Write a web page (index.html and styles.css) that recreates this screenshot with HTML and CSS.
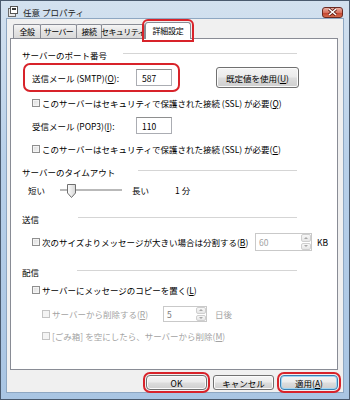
FILE: index.html
```html
<!DOCTYPE html>
<html lang="ja">
<head>
    <meta charset="UTF-8">
    <title>任意 プロパティ</title>
    <link rel="stylesheet" href="styles.css">
</head>
<body>
<div class="window">
    <div class="titlebar">
        <svg class="app-icon" width="10" height="11" viewBox="0 0 10 11">
            <rect x="0.5" y="2.5" width="7" height="8" fill="#e8e8e8" stroke="#6b6b6b"/>
            <rect x="2.5" y="0.5" width="7" height="7" fill="#fff" stroke="#555"/>
            <rect x="4" y="2" width="4" height="2" fill="#3a3a3a"/>
        </svg>
        <span class="title">任意 プロパティ</span>
        <span class="close">
            <svg width="11" height="8" viewBox="0 0 11 8">
                <path d="M2 1 L9 7 M9 1 L2 7" stroke="#5a1a12" stroke-width="3"/>
                <path d="M2 1 L9 7 M9 1 L2 7" stroke="#fff" stroke-width="1.6"/>
            </svg>
        </span>
    </div>

    <div class="client">
        <div class="tabs">
            <div class="tab tab-general">全般</div>
            <div class="tab tab-server">サーバー</div>
            <div class="tab tab-connect">接続</div>
            <div class="tab tab-security">セキュリティ</div>
            <div class="tab active">詳細設定</div>
        </div>

        <div class="panel">
            <div class="group group-port">
                <span>サーバーのポート番号</span><i class="rule rule-port"></i>
            </div>

            <div class="smtp-row">
                <div class="mark">
                    <span class="field-label">送信メール (SMTP)(<u>O</u>):</span>
                    <span class="field">587</span>
                </div>
                <button class="btn btn-default">既定値を使用(<u>U</u>)</button>
            </div>

            <div class="check row-ssl1">
                <span class="box"></span>このサーバーはセキュリティで保護された接続 (SSL) が必要(<u>Q</u>)
            </div>

            <div class="pop-row">
                <span class="field-label">受信メール (POP3)(<u>I</u>):</span>
                <span class="field">110</span>
            </div>

            <div class="check row-ssl2">
                <span class="box"></span>このサーバーはセキュリティで保護された接続 (SSL) が必要(<u>C</u>)
            </div>

            <div class="group group-timeout">
                <span>サーバーのタイムアウト</span><i class="rule rule-timeout"></i>
            </div>

            <div class="slider-row">
                <span>短い</span>
                <span class="track">
                    <svg class="thumb" width="9" height="14" viewBox="0 0 9 14">
                        <defs>
                            <linearGradient id="tg" x1="0" x2="1">
                                <stop offset="0" stop-color="#fdfdfd"/>
                                <stop offset="1" stop-color="#d6d6d6"/>
                            </linearGradient>
                        </defs>
                        <path d="M0.5 0.5 H8.5 V9 L4.5 13.5 L0.5 9 Z" fill="url(#tg)" stroke="#6f6f6f"/>
                    </svg>
                </span>
                <span class="long">長い</span>
                <span class="minutes">1 分</span>
            </div>

            <div class="group group-send">
                <span>送信</span><i class="rule rule-send"></i>
            </div>

            <div class="check row-split">
                <span class="box"></span>
                <span class="split-label">次のサイズよりメッセージが大きい場合は分割する(<u>B</u>)</span>
                <span class="spin spin-size disabled"><span class="spin-val">60</span><span class="arrows"><i class="up"></i><i class="down"></i></span></span>
                <span class="unit">KB</span>
            </div>

            <div class="group group-deliver">
                <span>配信</span><i class="rule rule-deliver"></i>
            </div>

            <div class="check row-copy">
                <span class="box"></span>サーバーにメッセージのコピーを置く(<u>L</u>)
            </div>

            <div class="check row-delete disabled">
                <span class="box"></span>
                <span class="delete-label">サーバーから削除する(<u>R</u>)</span>
                <span class="spin spin-days"><span class="spin-val">5</span><span class="arrows"><i class="up"></i><i class="down"></i></span></span>
                <span class="unit">日後</span>
            </div>

            <div class="check row-trash disabled">
                <span class="box"></span>[ごみ箱] を空にしたら、サーバーから削除(<u>M</u>)
            </div>
        </div>

        <div class="footer">
            <button class="btn btn-foot marked">OK</button>
            <button class="btn btn-foot">キャンセル</button>
            <button class="btn btn-foot btn-apply marked">適用(<u>A</u>)</button>
        </div>
    </div>
</div>
</body>
</html>
```

FILE: styles.css
```css
body {
    margin: 0;
    font-family: "Noto Sans CJK JP", "Noto Sans", sans-serif;
    font-size: 8.5px;
    color: #000;
}
u {
    text-decoration-thickness: 1px;
    text-underline-offset: 1px;
}
.window {
    width: 350px;
    height: 400px;
    box-sizing: border-box;
    border: 1px solid #4a5a6e;
    background: linear-gradient(#d3e1ef, #b8d0e9 40%, #a9c5e3);
    padding: 0 6px 7px 6px;
    display: flex;
    flex-direction: column;
}
.titlebar {
    height: 18px;
    display: flex;
    align-items: center;
    flex-shrink: 0;
}
.app-icon {
    margin-left: 1px;
    margin-top: 2px;
}
.title {
    margin-left: 5px;
    margin-top: 3px;
    font-size: 8.5px;
    color: #1c1c1c;
}
.close {
    margin-left: auto;
    margin-top: 4px;
    width: 21px;
    height: 11px;
    box-sizing: border-box;
    border: 1px solid #6b2a22;
    border-radius: 3px;
    background: linear-gradient(#eab0a4, #d7715e 50%, #c0402c 51%, #d46a4c);
    display: flex;
    align-items: center;
    justify-content: center;
}
.client {
    flex: 1;
    background: #f0f0f0;
    box-shadow: 0 0 0 1px #8ea7c2;
    padding: 0 5px 2px 3px;
    display: flex;
    flex-direction: column;
}

/* tabs */
.tabs {
    height: 19px;
    display: flex;
    align-items: flex-end;
    padding-left: 3px;
    flex-shrink: 0;
}
.tab {
    height: 14px;
    box-sizing: border-box;
    border: 1px solid #898c95;
    border-bottom: none;
    border-radius: 2px 2px 0 0;
    background: linear-gradient(#f5f5f5, #e4e4e4 50%, #d9d9d9);
    display: flex;
    align-items: center;
    justify-content: center;
    margin-right: -1px;
    white-space: nowrap;
    letter-spacing: -0.6px;
    font-size: 8px;
}
.tab-general { width: 28px; }
.tab-server { width: 37px; }
.tab-connect { width: 26px; }
.tab-security { width: 44px; }
.tab.active {
    position: relative;
    z-index: 1;
    width: 46px;
    height: 17px;
    margin: 0 0 -1px 1px;
    background: #fff;
    padding-bottom: 2px;
    outline: 2px solid #d8232a;
    outline-offset: 1px;
    border-radius: 3px 3px 0 0;
    letter-spacing: -0.3px;
}
.panel {
    height: 332px;
    box-sizing: border-box;
    border: 1px solid #898c95;
    background: #fff;
    padding-left: 11px;
    flex-shrink: 0;
}

/* group headers */
.group {
    width: 275px;
    height: 14px;
    display: flex;
    align-items: center;
    justify-content: space-between;
}
.rule {
    height: 1px;
    background: #d5d5d5;
    margin-top: -4px;
}
.group-port { margin-top: 9px; }
.group-timeout { margin-top: 8px; }
.group-send { margin-top: 14px; }
.group-deliver { margin-top: 14px; }
.rule-port { width: 174px; }
.rule-timeout { width: 159px; }
.rule-send { width: 219px; }
.rule-deliver { width: 220px; }

/* port rows */
.smtp-row {
    margin-top: 1px;
    height: 29px;
    display: flex;
    align-items: center;
}
.mark {
    margin-left: 1px;
    height: 29px;
    box-sizing: border-box;
    border: 2px solid #d8232a;
    border-radius: 7px;
    padding: 0 6px 0 7px;
    display: flex;
    align-items: center;
}
.field-label {
    width: 104px;
}
.field {
    width: 36px;
    height: 17px;
    box-sizing: border-box;
    border: 1px solid #abadb3;
    border-top-color: #8e8f8f;
    background: #fff;
    padding-left: 5px;
    display: flex;
    align-items: center;
}
.btn {
    font-family: inherit;
    font-size: 8.5px;
    color: #000;
    padding: 0;
    box-sizing: border-box;
    border: 1px solid #707070;
    border-radius: 3px;
    background: linear-gradient(#f4f4f4, #ebebeb 48%, #dddddd 52%, #cfcfcf);
    box-shadow: inset 0 0 0 1px #fbfbfb;
}
.btn-default {
    margin-left: 36px;
    width: 83px;
    height: 21px;
}
.pop-row {
    margin: 6px 0 0 10px;
    height: 17px;
    display: flex;
    align-items: center;
}

/* checkboxes */
.check {
    height: 16px;
    display: flex;
    align-items: center;
    margin-left: 10px;
}
.box {
    width: 8px;
    height: 8px;
    box-sizing: border-box;
    border: 1px solid #8f8f8f;
    background: linear-gradient(135deg, #dcdcdc, #f6f6f6);
    box-shadow: inset 0 0 0 1px #f4f4f4;
    margin-right: 2px;
    flex-shrink: 0;
}
.check.disabled {
    color: #a3a3a3;
    margin-left: 20px;
}
.check.disabled .box {
    border-color: #c4c4c4;
    background: #f4f4f4;
}
.row-ssl1 { margin-top: 3px; }
.row-ssl2 { margin-top: 7px; }
.row-split { margin-top: 7px; height: 18px; }
.row-copy { margin-top: 3px; }
.row-delete { margin-top: 8px; }
.row-trash { margin-top: 6px; }
.split-label { width: 213px; }
.delete-label { width: 111px; }

/* slider */
.slider-row {
    margin: 3px 0 0 6px;
    height: 16px;
    display: flex;
    align-items: center;
}
.track {
    margin-left: 15px;
    width: 62px;
    height: 2px;
    background: #b9b9b9;
    border-bottom: 1px solid #fff;
    display: flex;
    align-items: center;
}
.thumb {
    margin-left: 7px;
    margin-top: 2px;
}
.long { margin-left: 10px; }
.minutes { margin-left: 26px; }

/* spinners */
.spin {
    height: 18px;
    box-sizing: border-box;
    border: 1px solid #abadb3;
    background: #fff;
    display: flex;
    justify-content: space-between;
    color: #000;
}
.spin.disabled { border-color: #c9c9c9; color: #a3a3a3; }
.spin-size { width: 57px; }
.spin-days { width: 44px; height: 16px; border-color: #c9c9c9; color: #7a7a7a; }
.spin-val {
    padding-left: 3px;
    display: flex;
    align-items: center;
}
.arrows {
    width: 10px;
    display: flex;
    flex-direction: column;
    gap: 1px;
}
.arrows i {
    flex: 1;
    border: 1px solid #cfcfcf;
    border-radius: 2px;
    background: linear-gradient(#f7f7f7, #e6e6e6);
    display: flex;
    align-items: center;
    justify-content: center;
}
.arrows i::after {
    content: "";
    border-left: 2px solid transparent;
    border-right: 2px solid transparent;
}
.arrows .up::after { border-bottom: 2px solid #a8a8a8; }
.arrows .down::after { border-top: 2px solid #a8a8a8; }
.unit { margin-left: 5px; }
.row-delete .unit { margin-left: 8px; }

/* footer buttons */
.footer {
    margin-top: 5px;
    display: flex;
    justify-content: flex-end;
    gap: 6px;
}
.btn-foot {
    width: 61px;
    height: 15px;
}
.btn-foot.marked {
    outline: 2px solid #d8232a;
    outline-offset: 1px;
    border-radius: 4px;
}
.btn-apply {
    width: 58px;
    border-color: #3c7fb1;
    box-shadow: inset 0 0 0 1px #9fd6f4;
}
```
